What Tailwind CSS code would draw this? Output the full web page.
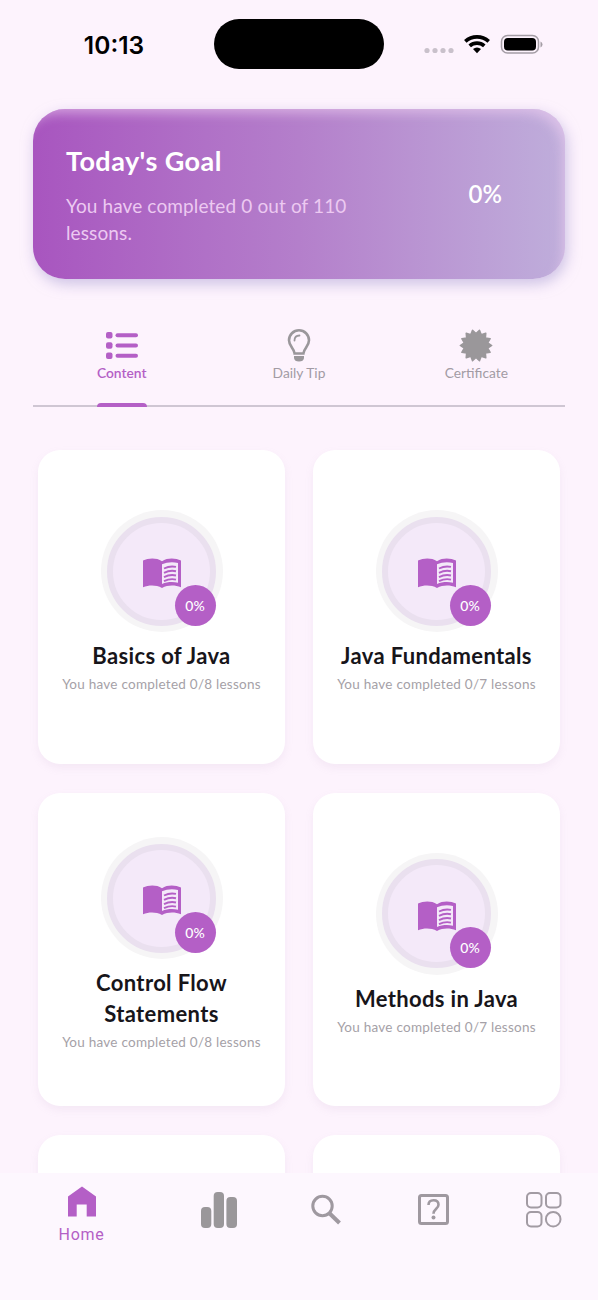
<!DOCTYPE html>
<html lang="en">
<head>
    <meta charset="UTF-8">
    <meta name="viewport" content="width=device-width, initial-scale=1.0">
    <script src="https://cdn.jsdelivr.net/npm/@tailwindcss/browser@4"></script>
    <title>Learn Java</title>
</head>
<body class="bg-[#fdf3fd] font-['Lato',sans-serif]">
    <!-- Shared icons -->
    <svg class="hidden">
        <symbol id="book" viewBox="0 0 38 30">
            <path fill="#b45fc6" fill-rule="evenodd" d="M0 2.600C5.500 0 13.500 -.3 19 3.200C24.500 -.3 32.500 0 38 2.600V29.200C32 27 25 26.700 19 30C13 26.700 6 27 0 29.200ZM19 6.200V26C24 23.700 30 23.500 35 24.700V5C30 3.600 24 4 19 6.200Z"/>
            <path fill="none" stroke="#b45fc6" stroke-width="1.900" d="M21 10.500Q27 7.500 33 8.900M21 14.800Q27 11.800 33 13.200M21 19.100Q27 16.100 33 17.500M21 23.200Q27 20.200 33 21.600"/>
        </symbol>
    </svg>

    <div class="h-[1300px] overflow-hidden flex flex-col">
        <!-- Status bar -->
        <header class="h-[109px] shrink-0 flex items-start pt-[19px]">
            <div class="w-[214px] h-[50px] flex items-center justify-center pt-[3px] pl-[14px] font-['Inter',sans-serif] font-semibold text-[24.500px] text-black">10:13</div>
            <div class="w-[170px] h-[50px] rounded-[25px] bg-black"></div>
            <div class="h-[50px] flex items-center pl-[39px]">
                <svg class="w-[121px] h-[24px]" viewBox="0 0 121 24">
                    <g fill="#c9c1cb">
                        <circle cx="4" cy="18.500" r="2.600"/><circle cx="12" cy="18.500" r="2.600"/><circle cx="20" cy="18.500" r="2.600"/><circle cx="28" cy="18.500" r="2.600"/>
                    </g>
                    <g fill="none" stroke="#000" stroke-width="3.700">
                        <path d="M42.300 9.300a17.500 17.500 0 0 1 23.400 0"/>
                        <path d="M46.700 13.900a11 11 0 0 1 14.600 0"/>
                    </g>
                    <path d="M50 17.100a6 6 0 0 1 8 0l-4 4.200z"/>
                    <rect x="78.500" y="3.500" width="37" height="17.500" rx="6" fill="none" stroke="#a49da5" stroke-width="1.500"/>
                    <rect x="81" y="6" width="32" height="12.500" rx="3.800"/>
                    <path d="M117.500 9.500q2 1 2 3t-2 3z" fill="#a49da5"/>
                </svg>
            </div>
        </header>

        <main class="grow min-h-0 overflow-hidden px-[33px] -mt-[20px] pt-[20px]">
            <!-- Goal -->
            <section class="h-[170px] rounded-[32px] bg-linear-to-r from-[#a855bf] via-[#b47fcb] to-[#bfaedb] shadow-[2px_5px_14px_#a99bd290,inset_-7px_9px_12px_-5px_#f0d0f299] flex items-center justify-between pl-[33px] pr-[63px]">
                <div class="w-[310px]">
                    <h1 class="pt-px text-[27px] leading-[34px] font-bold text-white tracking-[0.45px]">Today's Goal</h1>
                    <p class="mt-[14px] text-[19px] leading-[27px] tracking-[0.12px] text-[#ecc9f1]">You have completed 0 out of 110 lessons.</p>
                </div>
                <div class="text-[24px] font-semibold text-white">0%</div>
            </section>

            <!-- Tabs -->
            <nav class="mt-[45px] h-[83px] border-b-2 border-[#cfc6d3] grid grid-cols-3 text-[13.800px] text-[#a29ba4]">
                <div class="relative flex flex-col items-center text-[#b45fc6] font-semibold">
                    <svg class="w-[34px] h-[34px] mt-[4px]" viewBox="0 0 34 34" fill="#b45fc6">
                        <rect x="1" y="4" width="6.500" height="6.500" rx="2"/><rect x="1" y="14.200" width="6.500" height="6.500" rx="2"/><rect x="1" y="24.400" width="6.500" height="6.500" rx="2"/>
                        <rect x="10.500" y="5.300" width="22.500" height="4" rx="2"/><rect x="10.500" y="15.500" width="22.500" height="4" rx="2"/><rect x="10.500" y="25.700" width="22.500" height="4" rx="2"/>
                    </svg>
                    <span class="leading-[20px] mt-px">Content</span>
                    <div class="absolute -bottom-[2px] w-[50px] h-[4px] rounded-t-[4px] bg-[#b45fc6]"></div>
                </div>
                <div class="flex flex-col items-center">
                    <svg class="w-[34px] h-[34px] mt-[4px]" viewBox="0 0 34 34" fill="none" stroke="#9a979b" stroke-width="2.600">
                        <path d="M12.600 25.500C12.300 20.500 7 18.500 7 12.300A10 10 0 0 1 27 12.300C27 18.500 21.700 20.500 21.400 25.500Z"/>
                        <path stroke-width="1.800" d="M12.500 12.500q0-4.800 5-5" stroke-linecap="round"/>
                        <path stroke="none" fill="#9a979b" d="M12 28h10v2q-.5 3.500-5 3.500t-5-3.500z"/>
                    </svg>
                    <span class="leading-[20px] mt-px">Daily Tip</span>
                </div>
                <div class="flex flex-col items-center">
                    <svg class="w-[34px] h-[34px] mt-[4px]" viewBox="-17 -17.500 34 34">
                        <g id="burst"></g>
                    </svg>
                    <span class="leading-[20px] mt-px">Certificate</span>
                </div>
            </nav>

            <!-- Lessons -->
            <div id="lessons" class="mt-[43px] px-[5px] grid grid-cols-2 auto-rows-[313.500px] gap-x-[28px] gap-y-[29px]"></div>
        </main>

        <!-- Bottom navigation -->
        <footer class="h-[127px] shrink-0 bg-[#fdf7fe] flex items-start justify-between pl-[58px] pr-[36px]">
            <a href="#" class="w-[47px] mr-[19px] pt-[13px] flex flex-col items-center font-['Roboto',sans-serif] text-[16px] tracking-[0.7px] text-[#b45fc6]">
                <svg class="w-[28px] h-[31px]" viewBox="0 0 28 31" fill="#b45fc6"><path d="M0 10.500L14 .5L28 10.500V30.500H18.700V18.500H8.700V30.500H0Z"/></svg>
                <span class="mt-[6px] leading-[24px]">Home</span>
            </a>
            <a href="#" class="pt-[18px]">
                <svg class="w-[36px] h-[37px]" viewBox="0 0 36 37" fill="#9a979a"><rect y="16" width="10.300" height="21" rx="4"/><rect x="12.700" y="1" width="10.300" height="36" rx="4"/><rect x="25.400" y="6" width="10.600" height="31" rx="4"/></svg>
            </a>
            <a href="#" class="pt-[21px] -ml-[2px]">
                <svg class="w-[30px] h-[31px]" viewBox="0 0 30 31" fill="none" stroke="#9f99a0"><circle cx="11.500" cy="12" r="9.700" stroke-width="3"/><path stroke-width="4" d="M18.700 19.500L28.500 29"/></svg>
            </a>
            <a href="#" class="pt-[21px]">
                <svg class="w-[31px] h-[31px]" viewBox="0 0 31 31" fill="none" stroke="#9f99a0" stroke-width="3"><rect x="1.500" y="1.500" width="28" height="28" rx="2"/><path stroke-width="2.600" d="M10.500 11q0-4.700 5-4.700t5 4.500c0 4-5 4-5 9"/><circle cx="15.500" cy="23.500" r="2" fill="#9f99a0" stroke="none"/></svg>
            </a>
            <a href="#" class="pt-[18px]">
                <svg class="w-[37px] h-[37px]" viewBox="0 0 37 37" fill="none" stroke="#a29ba3" stroke-width="2"><rect x="2" y="2" width="14.500" height="14.500" rx="4"/><rect x="21" y="2" width="14.500" height="14.500" rx="4"/><rect x="2" y="21" width="14.500" height="14.500" rx="4"/><circle cx="28.200" cy="28.200" r="7.300"/></svg>
            </a>
        </footer>
    </div>

    <script>
        const lessons = [
            { title: 'Basics of Java', total: 8 },
            { title: 'Java Fundamentals', total: 7 },
            { title: 'Control Flow Statements', total: 8 },
            { title: 'Methods in Java', total: 7 },
            null,
            null,
        ];

        document.getElementById('lessons').innerHTML = lessons.map(lesson => `
            <div class="rounded-[22px] bg-white shadow-[0_4px_8px_#ac8fb81c] flex flex-col items-center justify-center px-4 text-center">
                ${lesson ? `
                <div class="relative w-[122px] h-[122px] rounded-full bg-[#f6f5f6] flex items-center justify-center">
                    <div class="w-[109px] h-[109px] rounded-full border-[6px] border-[#eae0ef] bg-[#f4e9f9] flex items-center justify-center">
                        <svg class="w-[38px] h-[30px] mt-[4px]"><use href="#book"/></svg>
                    </div>
                    <div class="absolute left-[74px] top-[74.500px] w-[41px] h-[41px] rounded-full bg-[#b45fc6] text-white text-[14px] font-medium flex items-center justify-center">0%</div>
                </div>
                <h2 class="mt-[8px] text-[22px] leading-[31px] font-bold text-[#17151a] tracking-[0.35px]">${lesson.title}</h2>
                <p class="mt-[3px] mb-[9.500px] text-[13.500px] leading-[20px] tracking-[0.25px] text-[#a5a1a7] whitespace-nowrap">You have completed 0/${lesson.total} lessons</p>
                ` : ''}
            </div>
        `).join('');

        // Certificate seal: 14 teeth around the centre
        const points = [];
        for (let i = 0; i < 28; i++) {
            const radius = i % 2 ? 15.7 : 12;
            const angle = i * Math.PI / 14;
            points.push((radius * Math.sin(angle)).toFixed(2) + ',' + (radius * Math.cos(angle)).toFixed(2));
        }
        document.getElementById('burst').innerHTML =
            `<polygon points="${points.join(' ')}" fill="#9a979a" stroke="#9a979a" stroke-width="1.500" stroke-linejoin="round"/>`;
    </script>
</body>
</html>
